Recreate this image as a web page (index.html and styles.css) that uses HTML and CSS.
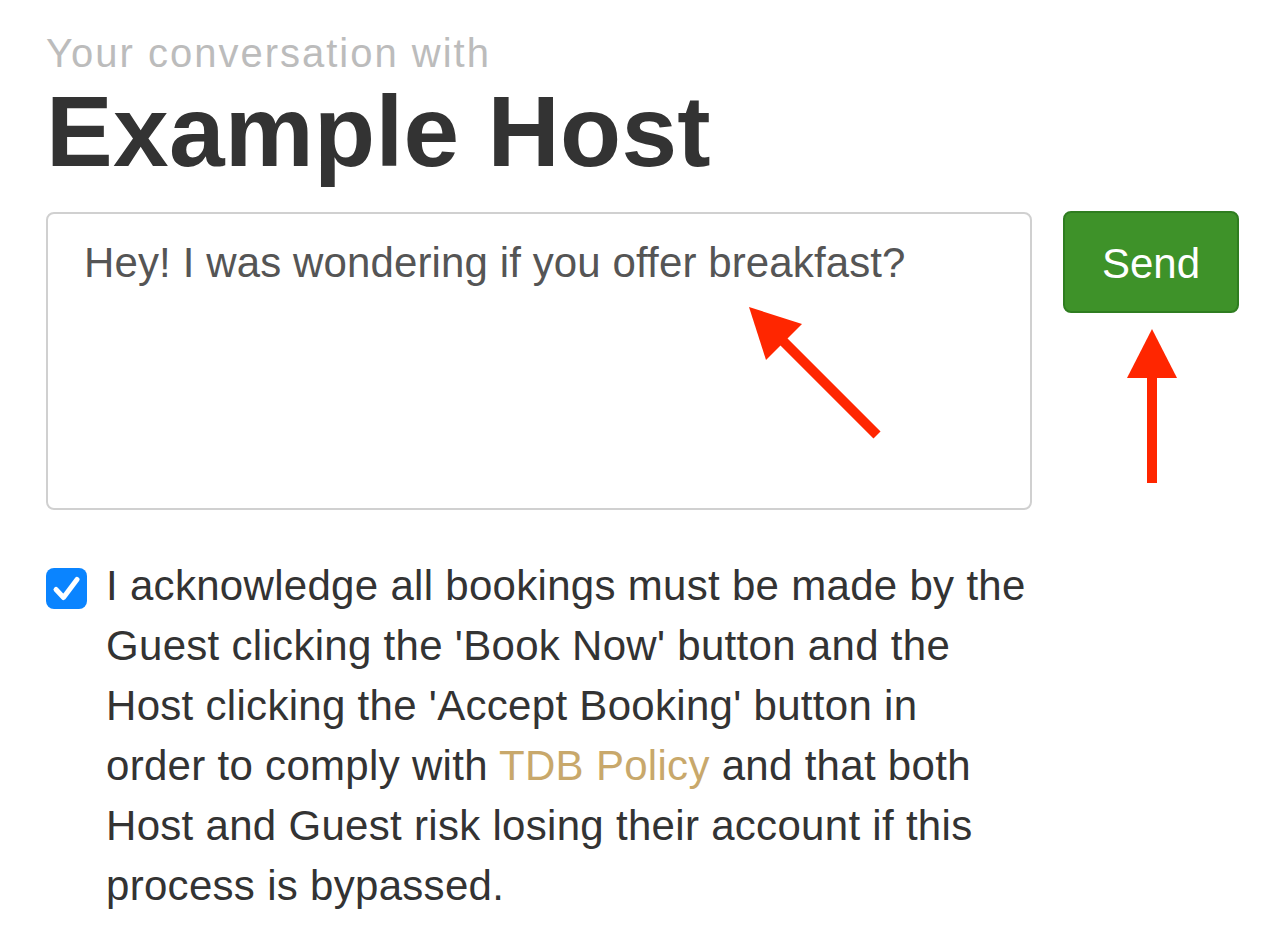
FILE: index.html
```html
<!DOCTYPE html>
<html lang="en">
<head>
<meta charset="utf-8">
<title>Conversation</title>
<link rel="stylesheet" href="styles.css">
</head>
<body>
<main class="page">
  <header class="head">
    <p class="sub">Your conversation with</p>
    <h1 class="title">Example Host</h1>
  </header>
  <form class="compose">
    <div class="row">
      <textarea class="msg">Hey! I was wondering if you offer breakfast?</textarea>
      <button type="button" class="send">Send</button>
    </div>
    <label class="ack">
      <span class="box"><svg viewBox="0 0 41 41" width="41" height="41"><path d="M10 21.5 L17.5 29.5 L31 11.5" fill="none" stroke="#fff" stroke-width="5" stroke-linecap="round" stroke-linejoin="round"/></svg></span>
      <span class="ack-text">I acknowledge all bookings must be made by the<br>Guest clicking the 'Book Now' button and the<br>Host clicking the 'Accept Booking' button in<br>order to comply with <a href="#" class="link">TDB Policy</a> and that both<br>Host and Guest risk losing their account if this<br>process is bypassed.</span>
    </label>
  </form>
  <svg class="marks" viewBox="0 0 1284 933" width="1284" height="933">
    <line x1="877" y1="435" x2="775" y2="333" stroke="#ff2600" stroke-width="10"/>
    <polygon points="749,307 802,324 766,360" fill="#ff2600"/>
    <rect x="1147" y="370" width="10" height="113" fill="#ff2600"/>
    <polygon points="1152,329 1127,378 1177,378" fill="#ff2600"/>
  </svg>
</main>
</body>
</html>
```
FILE: styles.css
```css
html, body {
  margin: 0;
  padding: 0;
  background: #fff;
}
body {
  font-family: "Liberation Sans", Arial, sans-serif;
  color: #333;
}
.page {
  position: relative;
  width: 1284px;
  height: 933px;
  box-sizing: border-box;
  padding: 29px 45px 0 46px;
  overflow: hidden;
}
.head {
  display: flex;
  flex-direction: column;
}
.sub {
  margin: 0;
  font-size: 40px;
  line-height: 48px;
  letter-spacing: 2px;
  color: #bcbcbc;
  font-weight: 400;
}
.title {
  margin: 4px 0 0 0;
  font-size: 100px;
  line-height: 100px;
  font-weight: 700;
  color: #333;
  letter-spacing: 0.3px;
}
.compose {
  margin-top: 31px;
  display: flex;
  flex-direction: column;
}
.row {
  display: flex;
  align-items: flex-start;
  gap: 31px;
}
.msg {
  width: 986px;
  height: 298px;
  box-sizing: border-box;
  border: 2px solid #d0d0d0;
  border-radius: 8px;
  padding: 24px 30px 24px 36px;
  font-family: "Liberation Sans", Arial, sans-serif;
  font-size: 42px;
  line-height: 50px;
  letter-spacing: 0.12px;
  color: #555;
  resize: none;
  outline: none;
  background: #fff;
  margin: 0;
}
.send {
  width: 176px;
  height: 102px;
  margin-top: -1px;
  box-sizing: border-box;
  background: #3e9229;
  border: 2px solid #2f7d20;
  border-radius: 8px;
  color: #fff;
  font-family: "Liberation Sans", Arial, sans-serif;
  font-size: 42px;
  line-height: 50px;
  padding: 4px 0 0 0;
  cursor: pointer;
}
.ack {
  margin-top: 46px;
  display: flex;
  align-items: flex-start;
  gap: 19px;
}
.box {
  flex: none;
  width: 41px;
  height: 41px;
  margin-top: 12px;
  border-radius: 8px;
  background: #0a84ff;
  display: flex;
}
.ack-text {
  width: 940px;
  font-size: 42px;
  line-height: 60px;
  letter-spacing: 0.3px;
  color: #333;
  white-space: nowrap;
}
.link {
  color: #c8a86b;
  text-decoration: none;
}
.marks {
  position: absolute;
  top: 0;
  left: 0;
  pointer-events: none;
}
```
